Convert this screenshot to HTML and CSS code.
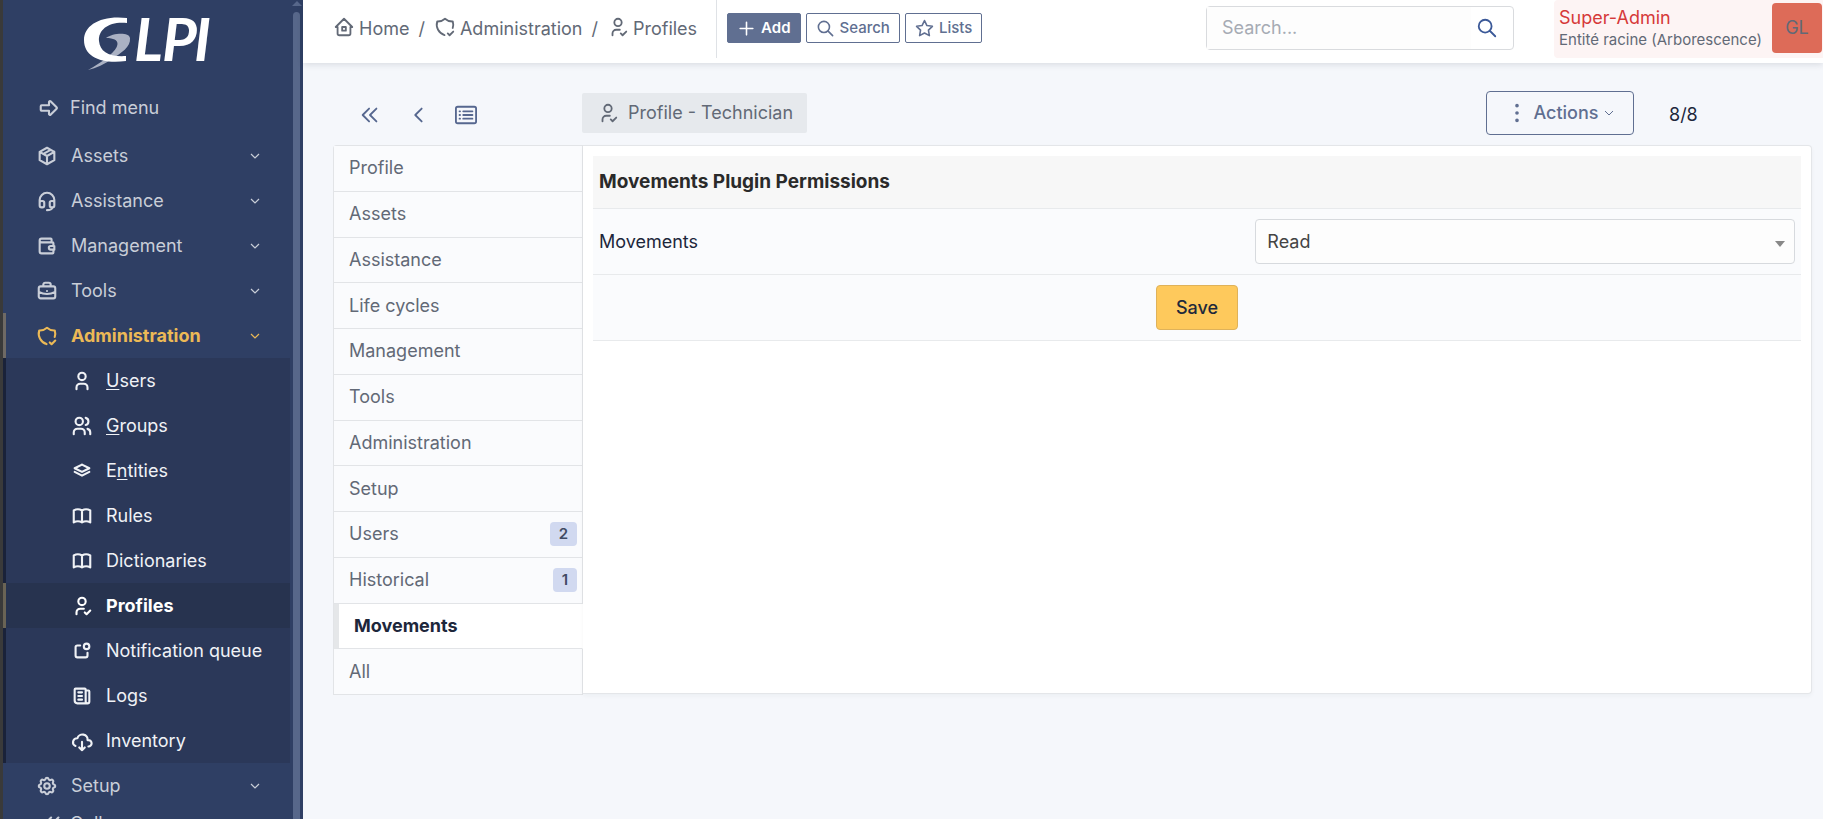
FILE: index.html
```html
<!DOCTYPE html>
<html lang="en">
<head>
<meta charset="utf-8">
<title>Profile - Technician - GLPI</title>
<link rel="stylesheet" href="styles.css">
</head>
<body>
<svg class="sprite" aria-hidden="true">
  <symbol id="arrow" viewBox="0 0 24 24"><path d="M4 9h8v-3.586a1 1 0 0 1 1.707 -.707l6.586 6.586a1 1 0 0 1 0 1.414l-6.586 6.586a1 1 0 0 1 -1.707 -.707v-3.586h-8a1 1 0 0 1 -1 -1v-4a1 1 0 0 1 1 -1z"/></symbol>
  <symbol id="package" viewBox="0 0 24 24"><path d="M12 3l8 4.5v9l-8 4.5l-8 -4.5v-9l8 -4.5M12 12l8 -4.5M12 12v9M12 12l-8 -4.5M16 5.25l-8 4.5"/></symbol>
  <symbol id="headset" viewBox="0 0 24 24"><path d="M4 14v-3a8 8 0 1 1 16 0v3M18 19c0 1.657 -2.686 3 -6 3M4 14a2 2 0 0 1 2 -2h1a2 2 0 0 1 2 2v3a2 2 0 0 1 -2 2h-1a2 2 0 0 1 -2 -2v-3zM15 14a2 2 0 0 1 2 -2h1a2 2 0 0 1 2 2v3a2 2 0 0 1 -2 2h-1a2 2 0 0 1 -2 -2v-3z"/></symbol>
  <symbol id="wallet" viewBox="0 0 24 24"><path d="M17 8v-3a1 1 0 0 0 -1 -1h-10a2 2 0 0 0 0 4h12a1 1 0 0 1 1 1v3m0 4v3a1 1 0 0 1 -1 1h-12a2 2 0 0 1 -2 -2v-12M20 12v4h-4a2 2 0 0 1 0 -4h4"/></symbol>
  <symbol id="briefcase" viewBox="0 0 24 24"><path d="M3 9a2 2 0 0 1 2 -2h14a2 2 0 0 1 2 2v9a2 2 0 0 1 -2 2h-14a2 2 0 0 1 -2 -2zM8 7v-2a2 2 0 0 1 2 -2h4a2 2 0 0 1 2 2v2M12 12l0 .01M3 13a20 20 0 0 0 18 0"/></symbol>
  <symbol id="shield" viewBox="0 0 24 24"><path d="M11.46 20.846a12 12 0 0 1 -7.96 -14.846a12 12 0 0 0 8.5 -3a12 12 0 0 0 8.5 3a12 12 0 0 1 -.09 7.06M15 19l2 2l4 -4"/></symbol>
  <symbol id="user" viewBox="0 0 24 24"><path d="M8 7a4 4 0 1 0 8 0a4 4 0 0 0 -8 0M6 21v-2a4 4 0 0 1 4 -4h4a4 4 0 0 1 4 4v2"/></symbol>
  <symbol id="users" viewBox="0 0 24 24"><path d="M5 7a4 4 0 1 0 8 0a4 4 0 1 0 -8 0M3 21v-2a4 4 0 0 1 4 -4h4a4 4 0 0 1 4 4v2M16 3.13a4 4 0 0 1 0 7.75M21 21v-2a4 4 0 0 0 -3 -3.85"/></symbol>
  <symbol id="stack" viewBox="0 0 24 24"><path d="M12 5l-8 4l8 4l8 -4l-8 -4M4 13l8 4l8 -4"/></symbol>
  <symbol id="book" viewBox="0 0 24 24"><path d="M3 19a9 9 0 0 1 9 0a9 9 0 0 1 9 0M3 6a9 9 0 0 1 9 0a9 9 0 0 1 9 0M3 6v13M12 6v13M21 6v13"/></symbol>
  <symbol id="user-check" viewBox="0 0 24 24"><path d="M8 7a4 4 0 1 0 8 0a4 4 0 0 0 -8 0M6 21v-2a4 4 0 0 1 4 -4h4M15 19l2 2l4 -4"/></symbol>
  <symbol id="notification" viewBox="0 0 24 24"><path d="M10 6h-3a2 2 0 0 0 -2 2v9a2 2 0 0 0 2 2h9a2 2 0 0 0 2 -2v-3M14 7a3 3 0 1 0 6 0a3 3 0 1 0 -6 0"/></symbol>
  <symbol id="news" viewBox="0 0 24 24"><path d="M16 6h3a1 1 0 0 1 1 1v11a2 2 0 0 1 -4 0v-13a1 1 0 0 0 -1 -1h-10a1 1 0 0 0 -1 1v12a3 3 0 0 0 3 3h11M8 8h4M8 12h4M8 16h4"/></symbol>
  <symbol id="cloud" viewBox="0 0 24 24"><path d="M19 18a3.5 3.5 0 0 0 0 -7h-1a5 4.5 0 0 0 -11 -2a4.6 4.4 0 0 0 -2.1 8.4M12 13v9M9 19l3 3l3 -3"/></symbol>
  <symbol id="settings" viewBox="0 0 24 24"><path d="M10.325 4.317c.426 -1.756 2.924 -1.756 3.35 0a1.724 1.724 0 0 0 2.573 1.066c1.543 -.94 3.31 .826 2.37 2.37a1.724 1.724 0 0 0 1.065 2.572c1.756 .426 1.756 2.924 0 3.35a1.724 1.724 0 0 0 -1.066 2.573c.94 1.543 -.826 3.31 -2.37 2.37a1.724 1.724 0 0 0 -2.572 1.065c-.426 1.756 -2.924 1.756 -3.35 0a1.724 1.724 0 0 0 -2.573 -1.066c-1.543 .94 -3.31 -.826 -2.37 -2.37a1.724 1.724 0 0 0 -1.065 -2.572c-1.756 -.426 -1.756 -2.924 0 -3.35a1.724 1.724 0 0 0 1.066 -2.573c-.94 -1.543 .826 -3.31 2.37 -2.37c1 .608 2.296 .07 2.572 -1.065zM9 12a3 3 0 1 0 6 0a3 3 0 0 0 -6 0"/></symbol>
  <symbol id="home" viewBox="0 0 24 24"><path d="M5 12h-2l9 -9l9 9h-2M5 12v7a2 2 0 0 0 2 2h10a2 2 0 0 0 2 -2v-7M10 12h4v4h-4z"/></symbol>
  <symbol id="chevron-left" viewBox="0 0 24 24"><path d="M16 5l-7 7l7 7"/></symbol>
  <symbol id="chevrons-left" viewBox="0 0 24 24"><path d="M11 5l-7 7l7 7M19 5l-7 7l7 7"/></symbol>
  <symbol id="chevron-down" viewBox="0 0 10 10"><path d="M1 3l4 4l4 -4"/></symbol>
  <symbol id="list" viewBox="0 0 24 24"><path d="M3 3h18a2 2 0 0 1 2 2v14a2 2 0 0 1 -2 2h-18a2 2 0 0 1 -2 -2v-14a2 2 0 0 1 2 -2zM9 8h10M9 12h10M9 16h10M5 8h.5M5 12h.5M5 16h.5"/></symbol>
  <symbol id="plus" viewBox="0 0 24 24"><path d="M12 4v16M4 12h16"/></symbol>
  <symbol id="search" viewBox="0 0 24 24"><path d="M3 10a7 7 0 1 0 14 0a7 7 0 1 0 -14 0M21 21l-6 -6"/></symbol>
  <symbol id="star" viewBox="0 0 24 24"><path d="M12 17.750l-6.172 3.245l1.179 -6.873l-5 -4.867l6.900 -1l3.086 -6.253l3.086 6.253l6.900 1l-5 4.867l1.179 6.873z"/></symbol>
  <symbol id="dots" viewBox="0 0 24 24"><path d="M12 4v.01M12 12v.01M12 20v.01"/></symbol>
</svg>

<aside class="sidebar">
  <nav class="menu" aria-label="Main menu">
    <a class="logo" href="#" aria-label="GLPI">
      <svg viewBox="0 -16 144 76" width="144" height="76">
        <path class="logo-tail" d="M23 22C30 17 46 16 47 22C48 31 38 37 29 43C22 48 13 52 5 54C12 50 22 44 28 38C36 31 39 22 23 22Z"/>
        <path class="logo-arc" d="M44 2V7C27 5 15 13 16 25C17 36 26 41 43 40V45C20 48 1 42 1 24C1 9 18 -1 44 2Z"/>
        <text class="logo-text" y="45" x="51 79 111">LPI</text>
      </svg>
    </a>
    <button class="find" type="button"><svg class="icon"><use href="#arrow"/></svg><span>Find menu</span></button>
    <ul class="items">
      <li><a class="item" href="#"><svg class="icon"><use href="#package"/></svg><span>Assets</span><svg class="chev"><use href="#chevron-down"/></svg></a></li>
      <li><a class="item" href="#"><svg class="icon"><use href="#headset"/></svg><span>Assistance</span><svg class="chev"><use href="#chevron-down"/></svg></a></li>
      <li><a class="item" href="#"><svg class="icon"><use href="#wallet"/></svg><span>Management</span><svg class="chev"><use href="#chevron-down"/></svg></a></li>
      <li><a class="item" href="#"><svg class="icon"><use href="#briefcase"/></svg><span>Tools</span><svg class="chev"><use href="#chevron-down"/></svg></a></li>
      <li><a class="item current" href="#"><svg class="icon"><use href="#shield"/></svg><span>Administration</span><svg class="chev"><use href="#chevron-down"/></svg></a>
        <ul class="submenu">
          <li><a class="item sub" href="#"><svg class="icon"><use href="#user"/></svg><span><u>U</u>sers</span></a></li>
          <li><a class="item sub" href="#"><svg class="icon"><use href="#users"/></svg><span><u>G</u>roups</span></a></li>
          <li><a class="item sub" href="#"><svg class="icon"><use href="#stack"/></svg><span>E<u>n</u>tities</span></a></li>
          <li><a class="item sub" href="#"><svg class="icon"><use href="#book"/></svg><span>Rules</span></a></li>
          <li><a class="item sub" href="#"><svg class="icon"><use href="#book"/></svg><span>Dictionaries</span></a></li>
          <li><a class="item sub active" href="#"><svg class="icon"><use href="#user-check"/></svg><span>Profiles</span></a></li>
          <li><a class="item sub" href="#"><svg class="icon"><use href="#notification"/></svg><span>Notification queue</span></a></li>
          <li><a class="item sub" href="#"><svg class="icon"><use href="#news"/></svg><span>Logs</span></a></li>
          <li><a class="item sub" href="#"><svg class="icon"><use href="#cloud"/></svg><span>Inventory</span></a></li>
        </ul>
      </li>
      <li><a class="item" href="#"><svg class="icon"><use href="#settings"/></svg><span>Setup</span><svg class="chev"><use href="#chevron-down"/></svg></a></li>
    </ul>
    <button class="find collapse" type="button"><svg class="icon"><use href="#chevrons-left"/></svg><span>Collapse menu</span></button>
  </nav>
  <div class="scrollbar" aria-hidden="true"><span class="scroll-up"></span><span class="thumb"></span></div>
</aside>

<div class="page">
  <header class="topbar">
    <nav class="breadcrumb" aria-label="Breadcrumb">
      <a href="#"><svg class="icon"><use href="#home"/></svg>Home</a><span>/</span>
      <a href="#"><svg class="icon"><use href="#shield"/></svg>Administration</a><span>/</span>
      <a href="#"><svg class="icon"><use href="#user-check"/></svg>Profiles</a>
    </nav>
    <div class="quick">
      <button class="btn solid" type="button"><svg class="icon"><use href="#plus"/></svg>Add</button>
      <button class="btn" type="button"><svg class="icon"><use href="#search"/></svg>Search</button>
      <button class="btn" type="button"><svg class="icon"><use href="#star"/></svg>Lists</button>
    </div>
    <form class="search">
      <input type="search" placeholder="Search..." aria-label="Search">
      <button type="button" aria-label="Run search"><svg class="icon"><use href="#search"/></svg></button>
    </form>
    <a class="account" href="#">
      <span class="who"><span class="role">Super-Admin</span><span class="entity">Entité racine (Arborescence)</span></span>
      <span class="avatar">GL</span>
    </a>
  </header>

  <main class="content">
    <div class="toolbar">
      <div class="pager">
        <a href="#" aria-label="First"><svg class="icon"><use href="#chevrons-left"/></svg></a>
        <a href="#" aria-label="Previous"><svg class="icon"><use href="#chevron-left"/></svg></a>
        <a href="#" aria-label="List"><svg class="icon"><use href="#list"/></svg></a>
      </div>
      <h1 class="title"><svg class="icon"><use href="#user-check"/></svg>Profile - Technician</h1>
      <button class="actions" type="button"><svg class="icon dots"><use href="#dots"/></svg>Actions<svg class="chev"><use href="#chevron-down"/></svg></button>
      <span class="count">8/8</span>
    </div>

    <div class="panel">
      <nav class="tabs" aria-label="Profile sections">
        <a href="#">Profile</a>
        <a href="#">Assets</a>
        <a href="#">Assistance</a>
        <a href="#">Life cycles</a>
        <a href="#">Management</a>
        <a href="#">Tools</a>
        <a href="#">Administration</a>
        <a href="#">Setup</a>
        <a href="#">Users<span class="badge">2</span></a>
        <a href="#">Historical<span class="badge">1</span></a>
        <a class="selected" href="#">Movements</a>
        <a href="#">All</a>
      </nav>
      <form class="card">
        <table class="rights">
          <colgroup><col class="name"><col></colgroup>
          <thead><tr><th colspan="2">Movements Plugin Permissions</th></tr></thead>
          <tbody>
            <tr>
              <td><label for="movements">Movements</label></td>
              <td class="value"><div class="picker"><select id="movements"><option>Read</option><option>Write</option></select></div></td>
            </tr>
            <tr><td class="submit" colspan="2"><button class="save" type="button">Save</button></td></tr>
          </tbody>
        </table>
      </form>
    </div>
  </main>
</div>
</body>
</html>
```
FILE: styles.css
```css
* { box-sizing: border-box; }

body {
  display: flex;
  height: 100vh;
  margin: 0;
  overflow: hidden;
  background: #f5f7fb;
  color: #1d273b;
  font: 18px/26px Inter, "Liberation Sans", sans-serif;
}

a { color: inherit; text-decoration: none; }
ul { margin: 0; padding: 0; list-style: none; }
button, input, select { margin: 0; font: inherit; color: inherit; }
u { text-underline-offset: 2px; }

.sprite { position: absolute; width: 0; height: 0; }

.icon {
  flex: none;
  width: 22px;
  height: 22px;
  fill: none;
  stroke: currentColor;
  stroke-width: 2;
  stroke-linecap: round;
  stroke-linejoin: round;
}

.chev {
  flex: none;
  width: 10px;
  height: 10px;
  fill: none;
  stroke: currentColor;
}

/* Sidebar */
.sidebar {
  display: flex;
  flex: none;
  width: 303px;
  border-left: 3px solid #3a3a3a;
  background: #2f3f64;
  color: #c9ced8;
  overflow: hidden;
}

.menu { flex: 1; }
.menu .icon { stroke-width: 2.3; }
.menu .chev { stroke-width: 1.2; }

.logo { display: flex; padding: 0 0 13px 80px; }
.logo-arc { fill: #fff; }
.logo-tail { fill: #aab1c3; }
.logo-text { fill: #fff; font: italic 700 60px Lato, sans-serif; }

.find {
  display: flex;
  align-items: center;
  gap: 10px;
  width: 100%;
  height: 38px;
  padding: 0 0 0 35px;
  border: 0;
  background: none;
}

.items { padding-top: 6px; }

.item {
  display: flex;
  align-items: center;
  gap: 13px;
  height: 45px;
  padding: 0 30px 0 30px;
  border-left: 3px solid transparent;
}

.item .chev { margin-left: auto; }

.item.current { border-color: #6f6a65; color: #ecb956; font-weight: 700; }

.submenu { background: #2b3859; color: #f0f2f6; }
.item.sub { padding-left: 65px; padding-right: 0; border-color: #1a2239; }
.item.sub.active { border-color: #6a6455; background: #27334f; color: #fff; font-weight: 700; }

.collapse { height: 32px; padding-left: 38px; gap: 7px; }

.scrollbar {
  display: flex;
  flex-direction: column;
  align-items: center;
  width: 13px;
  padding-top: 1px;
}

.scroll-up {
  border: 5px solid transparent;
  border-top: 0;
  border-bottom-color: #57678a;
}

.thumb {
  flex: 1;
  width: 7px;
  margin-top: 6px;
  border-radius: 4px 4px 0 0;
  background: #57678a;
}

/* Top bar */
.page { flex: 1; min-width: 0; }

.topbar {
  display: flex;
  align-items: flex-start;
  height: 63px;
  background: #fff;
  box-shadow: 0 2px 6px rgba(29, 39, 59, 0.12);
}

.breadcrumb {
  display: flex;
  align-items: center;
  gap: 9px;
  height: 58px;
  padding: 0 19px 0 30px;
  border-right: 1px solid #dfe2e6;
  color: #626976;
}

.breadcrumb a { display: flex; align-items: flex-start; gap: 4px; }

.quick { display: flex; gap: 5px; padding: 13px 0 0 10px; }

.btn {
  display: flex;
  align-items: center;
  gap: 5px;
  height: 30px;
  padding: 0 9px;
  border: 1px solid #606f91;
  border-radius: 2px;
  background: #fff;
  color: #606f91;
  font-size: 15px;
  font-weight: 500;
}

.btn .icon { width: 19px; height: 19px; }
.btn.solid { background: #606f91; color: #fff; font-weight: 600; }

.search {
  display: flex;
  width: 308px;
  height: 44px;
  margin: 6px 40px 0 auto;
  border: 1px solid #d9dbde;
  border-radius: 4px;
}

.search input {
  flex: 1;
  min-width: 0;
  padding: 0 15px;
  border: 0;
  background: #fdfdfd;
  outline: 0;
}

.search input::placeholder { color: #a6abb4; }
.search button { padding: 0 15px 0 5px; border: 0; background: none; color: #3b5998; line-height: 0; }

.account {
  display: flex;
  justify-content: space-between;
  gap: 10px;
  height: 58px;
  padding: 3px 1px 0 5px;
  border-radius: 4px 0 0 4px;
  background: #fdf4f4;
}

.who { display: flex; flex-direction: column; padding-top: 3px; }
.role { color: #d63939; line-height: 24px; }
.entity { color: #626976; font-size: 15px; line-height: 20px; }

.avatar {
  width: 50px;
  height: 50px;
  border-radius: 4px;
  background: #dd6b58;
  color: #626976;
  line-height: 50px;
  text-align: center;
}

/* Record toolbar */
.content { padding: 28px 11px 0 30px; }

.toolbar { display: flex; height: 44px; }

.pager {
  display: flex;
  flex: none;
  width: 249px;
  padding: 13px 0 0 26px;
  gap: 26px;
  color: #56678f;
}

.title {
  display: flex;
  align-items: center;
  gap: 9px;
  height: 40px;
  margin: 2px 0 0;
  padding: 0 14px 0 15px;
  border-radius: 2px;
  background: #e6e9ed;
  color: #626976;
  font-size: 18px;
  font-weight: 400;
}

.actions {
  display: flex;
  align-items: center;
  justify-content: center;
  gap: 5px;
  width: 148px;
  margin-left: auto;
  padding: 0;
  border: 1px solid #606f91;
  border-radius: 4px;
  background: none;
  color: #606f91;
  font-weight: 500;
}

.dots { stroke-width: 4; }

.count { width: 178px; padding: 11px 0 0 35px; }

/* Tabs and form */
.panel { display: flex; margin-top: 10px; }

.tabs {
  display: grid;
  flex: none;
  grid-auto-rows: 1fr;
  width: 250px;
  min-height: 550px;
  border: 1px solid #e2e4e7;
  border-width: 1px 0 0 1px;
  border-radius: 4px 0 0 0;
}

.tabs a {
  display: flex;
  align-items: center;
  justify-content: space-between;
  padding: 0 5px 0 15px;
  border: 1px solid #e2e4e7;
  border-width: 0 1px 1px 0;
  background: #fafbfd;
  color: #626976;
}

.tabs .selected {
  border-left: 5px solid #e5e7e9;
  border-right-color: #fff;
  background: #fff;
  color: #1d273b;
  font-weight: 700;
}

.badge {
  padding: 0 9px;
  border-radius: 4px;
  background: #d1d9f0;
  color: #414b63;
  font-size: 15px;
  font-weight: 600;
  line-height: 24px;
}

.card {
  flex: 1;
  margin-bottom: 1px;
  padding: 10px;
  border: 1px solid #e4e6e9;
  border-left: 0;
  border-radius: 0 4px 4px 0;
  background: #fff;
  box-shadow: 0 2px 4px rgba(29, 39, 59, 0.04);
}

.rights {
  width: 100%;
  border-collapse: separate;
  border-spacing: 0;
  table-layout: fixed;
  background: #fafbfd;
}

.rights th, .rights td { padding: 10px 6px; border-bottom: 1px solid #e8eaec; }
.rights th { height: 53px; background: #f7f7f7; color: #2a2a2a; font-size: 19px; text-align: left; }
.rights tbody tr { height: 66px; }
.rights .name { width: 54%; }
.rights .value { padding-left: 10px; }

.picker { position: relative; }

.picker::after {
  position: absolute;
  top: 22px;
  right: 10px;
  border: 5px solid transparent;
  border-top: 6px solid #888;
  border-bottom: 0;
  content: "";
}

.picker select {
  display: block;
  width: 100%;
  height: 45px;
  padding: 0 11px;
  border: 1px solid #d7dade;
  border-radius: 4px;
  background: #fdfdfd;
  color: #444;
  appearance: none;
}

.rights .submit { text-align: center; }

.save {
  display: inline-block;
  height: 45px;
  padding: 0 19px;
  border: 1px solid #dfb25a;
  border-radius: 4px;
  background: #fec95c;
  color: #1e293b;
  font-weight: 500;
  vertical-align: top;
}
```
